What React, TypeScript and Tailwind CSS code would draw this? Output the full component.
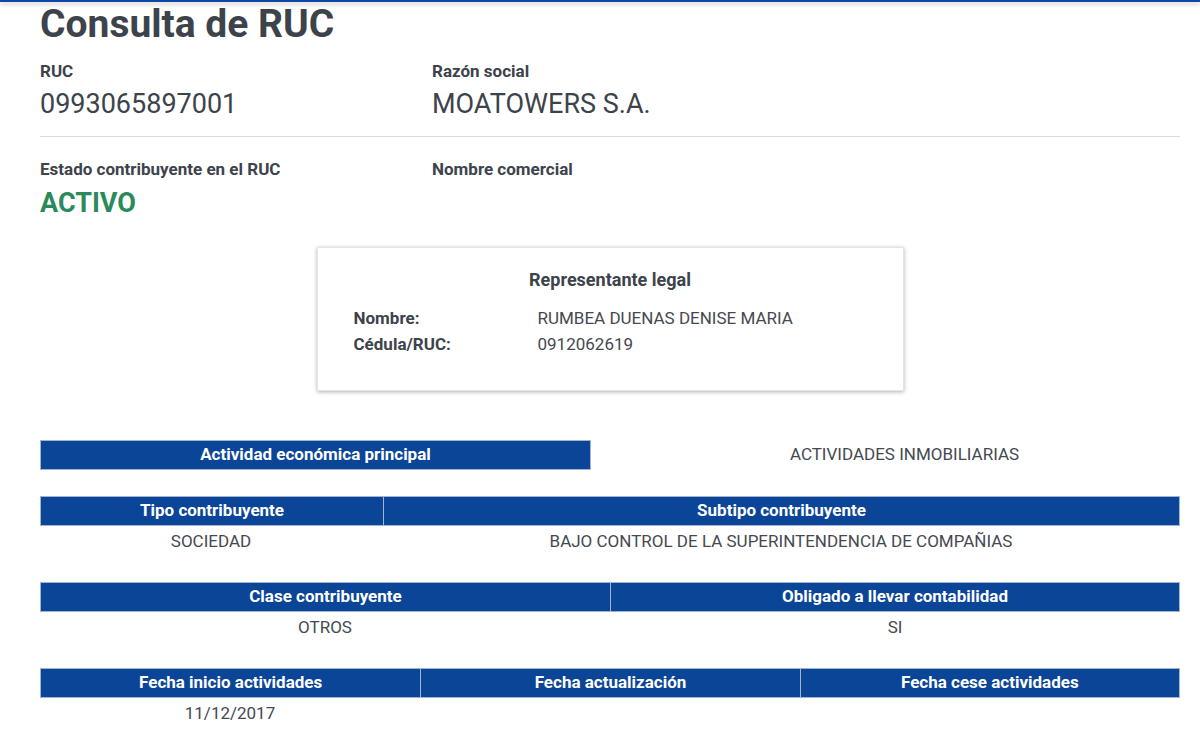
const HeaderRow = ({ cols, grid }: { cols: string[]; grid: string }) => (
  <div className={`grid ${grid} bg-[#0a4597] border border-[#a4b3cf]`}>
    {cols.map((c, i) => (
      <div
        key={c}
        className={`h-[28px] flex items-center justify-center text-white font-bold text-[17px] ${i > 0 ? 'border-l border-[#a4b3cf]' : ''}`}
      >
        {c}
      </div>
    ))}
  </div>
);

const ValueRow = ({ vals, grid }: { vals: string[]; grid: string }) => (
  <div className={`grid ${grid} h-[32px] items-center text-[17px] text-[#45494f]`}>
    {vals.map((v, i) => (
      <div key={i} className="text-center">
        {v}
      </div>
    ))}
  </div>
);

const App = () => {
  return (
    <div className="min-h-screen bg-white font-['Roboto',sans-serif] text-[#3d434b]">
      <div className="h-[2px] bg-[#0d47a1] shadow-[0_2px_5px_rgba(0,0,0,0.3)]" />

      <main className="pl-[40px] pr-[20px]">
        <h1 className="mt-[3px] text-[39px] leading-[39px] font-bold">Consulta de RUC</h1>

        <div className="grid grid-cols-[392px_1fr] mt-[17px]">
          <div>
            <div className="text-[17px] leading-[20px] font-bold">RUC</div>
            <div className="mt-[8px] text-[27px] leading-[30px]">0993065897001</div>
          </div>
          <div>
            <div className="text-[17px] leading-[20px] font-bold">Razón social</div>
            <div className="mt-[8px] text-[27px] leading-[30px]">MOATOWERS S.A.</div>
          </div>
        </div>

        <div className="mt-[17px] h-px bg-[#dcdcdc]" />

        <div className="grid grid-cols-[392px_1fr] mt-[22px]">
          <div>
            <div className="text-[17px] leading-[20px] font-bold">Estado contribuyente en el RUC</div>
            <div className="mt-[9px] text-[27px] leading-[30px] font-bold text-[#2a8a5c]">ACTIVO</div>
          </div>
          <div>
            <div className="text-[17px] leading-[20px] font-bold">Nombre comercial</div>
          </div>
        </div>

        <div className="mx-auto mt-[29px] w-[587px] border border-[#e4e4e4] shadow-[0_1px_4px_rgba(0,0,0,0.3)] pt-[20px] pb-[33px] px-[36px]">
          <div className="text-center text-[18px] leading-[24px] font-bold">Representante legal</div>
          <div className="mt-[13px] grid grid-cols-[184px_1fr] text-[17px] leading-[26px]">
            <div className="font-bold">Nombre:</div>
            <div className="text-[#45494f]">RUMBEA DUENAS DENISE MARIA</div>
            <div className="font-bold">Cédula/RUC:</div>
            <div className="text-[#45494f]">0912062619</div>
          </div>
        </div>

        <div className="mt-[49px] grid grid-cols-2 gap-[38px] items-center">
          <div className="h-[30px] bg-[#0a4597] border border-[#a4b3cf] flex items-center justify-center text-white font-bold text-[17px]">
            Actividad económica principal
          </div>
          <div className="text-center text-[17px] text-[#45494f]">ACTIVIDADES INMOBILIARIAS</div>
        </div>

        <div className="mt-[26px]">
          <HeaderRow grid="grid-cols-[342px_1fr]" cols={['Tipo contribuyente', 'Subtipo contribuyente']} />
          <ValueRow grid="grid-cols-[342px_1fr]" vals={['SOCIEDAD', 'BAJO CONTROL DE LA SUPERINTENDENCIA DE COMPAÑIAS']} />
        </div>

        <div className="mt-[24px]">
          <HeaderRow grid="grid-cols-2" cols={['Clase contribuyente', 'Obligado a llevar contabilidad']} />
          <ValueRow grid="grid-cols-2" vals={['OTROS', 'SI']} />
        </div>

        <div className="mt-[24px]">
          <HeaderRow
            grid="grid-cols-3"
            cols={['Fecha inicio actividades', 'Fecha actualización', 'Fecha cese actividades']}
          />
          <ValueRow grid="grid-cols-3" vals={['11/12/2017', '', '']} />
        </div>
      </main>
    </div>
  );
};

export default App;
